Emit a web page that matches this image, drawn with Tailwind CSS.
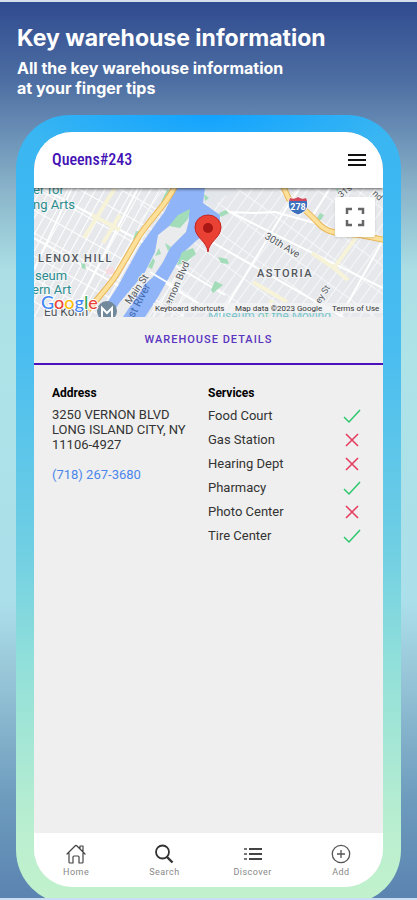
<!DOCTYPE html>
<html lang="en">
<head>
<meta charset="utf-8">
<meta name="viewport" content="width=device-width, initial-scale=1">
<title>Key warehouse information</title>
<script src="https://cdn.jsdelivr.net/npm/@tailwindcss/browser@4"></script>
</head>
<body class="font-[Roboto,sans-serif]">
<div class="flex min-h-screen flex-col overflow-hidden border-t-2 border-b-2 border-t-[#d5dfee] border-b-[#c9def2] bg-[linear-gradient(to_bottom,#304b90_0%,#4e6fa3_9%,#8ab4ca_21%,#abdfe5_30%,#aee3e8_40%,#abdfea_67%,#98c6d8_75%,#6d9bbd_89%,#5b84b1_100%)]">
  <header class="px-[17px] pt-5 font-[Inter,sans-serif] text-white">
    <h1 class="text-[23px] leading-8 font-bold">Key warehouse information</h1>
    <p class="pt-1 text-base leading-5 font-bold">All the key warehouse information<br>at your finger tips</p>
  </header>

  <main class="mx-4 mt-[17px] -mb-[6px] flex flex-1 flex-col rounded-[54px] bg-[radial-gradient(ellipse_190px_50px_at_50%_0,#12a3ff,transparent),linear-gradient(to_bottom,#38b5f2_0%,#4abdf0_30%,#70cfe3_55%,#90dfda_69%,#b9eed0_90%,#c2f2cc_100%)] px-[18px] py-[17px]">
    <div class="flex flex-1 flex-col overflow-hidden rounded-[38px] bg-[#efefef]">
      <div class="relative z-10 flex h-14 items-center justify-between bg-white pr-[17px] pl-[18px] shadow-[0_1px_3px_rgba(0,0,0,0.6)]">
        <h2 class="font-['Roboto_Condensed',Roboto,sans-serif] text-base font-medium text-[#4312b5]">Queens#243</h2>
        <button type="button" aria-label="Menu" class="text-[#111]">
          <svg class="h-4 w-[18px]" viewBox="0 0 18 16" fill="none" stroke="currentColor" stroke-width="2"><path d="M0 3h18M0 8h18M0 13h18"/></svg>
        </button>
      </div>

      <section aria-label="Map" class="relative h-[129px]">
        <svg class="h-full w-full" viewBox="34 188 349 129" preserveAspectRatio="xMidYMid slice" font-family="Roboto, sans-serif">
          <defs>
            <pattern id="west" width="8" height="20" patternUnits="userSpaceOnUse" patternTransform="translate(40 190) rotate(29)"><path d="M0 0H8M0 0V20" stroke="#fff" stroke-width="2" fill="none"/></pattern>
            <pattern id="east" width="9" height="23" patternUnits="userSpaceOnUse" patternTransform="translate(240 190) rotate(36)"><path d="M0 0H9M0 0V23" stroke="#f6f7f9" stroke-width="2" fill="none"/></pattern>
          </defs>
          <rect x="34" y="188" width="349" height="129" fill="#e6e8eb"/>
          <rect x="34" y="188" width="150" height="129" fill="url(#west)"/>
          <rect x="140" y="188" width="243" height="129" fill="url(#east)"/>
          <g stroke="#fff" fill="none" stroke-width="2">
            <path d="M34 270 72 188M72 317 138 188M42 188 150 246M34 238 119 286M205 238 383 340M226 210 383 288M220 317 285 210 300 188M226 212 255 213 275 212 315 223M340 317 383 240M154 276 220 317M176 266 225 295M330 188 312 217"/>
          </g>
          <g stroke="#f7f3d8" fill="none" stroke-width="4">
            <path d="M84 238 115 188M92 215 120 230M103 243 120 215M312 253 334 268 357 236M253 282 287 302M272 300 265 317M334 268 348 280"/>
          </g>
          <path d="M176 188H205L203 203 220 215V224L197 240 184 252 176 265 167 281 158 297 145 317H98L118 286 140 246 165 211Z" fill="#8fb4f8"/>
          <path d="M205 188 205 203 215 207 220 198 236 192V188Z" fill="#e3e6ea"/>
          <path d="M188 210 173 223 158 235 155 252 145 272 137 282 120 302 110 317H123L133 302 143 286 153 277 163 262 170 248 186 232 189 220Z" fill="#e9ebed"/>
          <path d="M150 272 180 290" stroke="#fff" stroke-width="2"/>
          <g fill="#a3dcb8">
            <path d="M190 209 178 215 169 226 180 228 188 219ZM159 248 155 256 161 254ZM165 243 168 251 171 247ZM153 258 148 267 152 269 155 261ZM182 252 193 248 196 254 185 263 177 265ZM167 190 161 202 165 205 174 190ZM136 231 133 239 139 240 141 232ZM81 263 85 264 86 269 82 268ZM204 194 209 198 205 201ZM219 213 226 210 229 213 221 217ZM218 257 227 259 229 264 221 263ZM215 281 223 285 213 293 211 290ZM320 213 324 215 321 220 316 220ZM336 189 341 190 338 194Z"/>
          </g>
          <path d="M105 270 112 266 116 273 107 275Z" fill="#f4dce0"/>
          <path d="M175 186C166 206 147 222 138 238L118 272C110 286 100 295 88 310" fill="none" stroke="#e9b75a" stroke-width="6"/>
          <path d="M175 186C166 206 147 222 138 238L118 272C110 286 100 295 88 310" fill="none" stroke="#fde19a" stroke-width="4"/>
          <path d="M282 184 289 199C303 207 311 215 319 224S337 233 360 235L385 240" fill="none" stroke="#e9b75a" stroke-width="6"/>
          <path d="M282 184 289 199C303 207 311 215 319 224S337 233 360 235L385 240" fill="none" stroke="#fde19a" stroke-width="4"/>

          <path d="M290 198Q294 200 298 197 302 200 306 198C309 204 309 211 298 215 287 211 287 204 290 198Z" fill="#3c70bc" stroke="#fff"/>
          <path d="M290 198Q294 200 298 197 302 200 306 198L307 201H289Z" fill="#d6485a"/>
          <text x="298" y="210" text-anchor="middle" font-size="9" font-weight="700" fill="#fff">278</text>

          <g fill="#2c8c8f" stroke="#f2f5f6" stroke-width="2" paint-order="stroke" font-size="13">
            <text x="33" y="194">er for</text><text x="33" y="209">ng Arts</text>
            <text x="35" y="280">seum</text><text x="32" y="294">ern Art</text>
          </g>
          <g fill="#51565b" stroke="#f3f4f5" stroke-width="2" paint-order="stroke">
            <text x="38" y="262" font-size="11" font-weight="500" letter-spacing="1.5">LENOX HILL</text>
            <text x="257" y="277" font-size="11" font-weight="500" letter-spacing="1.5">ASTORIA</text>
            <text x="44" y="316" font-size="12">Eu Korin</text>
            <text transform="translate(264 238) rotate(31)" font-size="10">30th Ave</text>
            <text transform="translate(130 305) rotate(-56)" font-size="10">Main St</text>
            <text transform="translate(168 312) rotate(-66)" font-size="10">Vernon Blvd</text>
            <text transform="translate(320 304) rotate(-58)" font-size="9">ey St</text>
            <text transform="translate(341 198) rotate(-38)" font-size="9">31st</text>
            <text transform="translate(372 194) rotate(45)" font-size="9">nd</text>
          </g>
          <text transform="translate(128 329) rotate(-62)" font-size="11" fill="#3f69ad">East River</text>

          <circle cx="107" cy="311" r="10" fill="#71899a"/>
          <path d="M102 317V308L107 313 112 308V317" fill="none" stroke="#fff" stroke-width="2"/>
          <text x="208" y="320" font-size="12" fill="#7cc6cb">Museum of the Moving</text>
          <rect x="153" y="303" width="230" height="10" fill="#f2f3f4" fill-opacity="0.8"/>
          <g fill="#333" font-size="8">
            <text x="155" y="311">Keyboard shortcuts</text>
            <text x="235" y="311">Map data ©2023 Google</text>
            <text x="332" y="311">Terms of Use</text>
          </g>
          <text x="41" y="309" font-family="Lato, sans-serif" font-size="18" font-weight="500" stroke="#fff" stroke-width="2" paint-order="stroke"><tspan fill="#4285f4">G</tspan><tspan fill="#ea4335">o</tspan><tspan fill="#fbbc05">o</tspan><tspan fill="#4285f4">g</tspan><tspan fill="#34a853">l</tspan><tspan fill="#ea4335">e</tspan></text>

          <path d="M208 252C207 241 195 238 195 227A13 12 0 0 1 221 227C221 238 209 241 208 252Z" fill="#e94235" stroke="#c5221f"/>
          <circle cx="208" cy="228" r="5" fill="#a81713"/>
        </svg>
        <button type="button" aria-label="Toggle fullscreen view" class="absolute top-[9px] right-2 flex size-10 items-center justify-center rounded-xs bg-white text-[#666] shadow">
          <svg class="size-5" viewBox="0 0 20 20" fill="none" stroke="currentColor" stroke-width="2.500"><path d="M2 7V2H7M13 2H18V7M18 13V18H13M7 18H2V13"/></svg>
        </button>
      </section>

      <button type="button" class="h-12 border-b-2 border-[#4a12b8] text-[11px] font-medium tracking-[1px] text-[#5a35c0]">WAREHOUSE DETAILS</button>

      <div class="grid flex-1 grid-cols-[156px_1fr] content-start pt-5 pr-[21px] pl-[18px] text-[13px] text-[#333]">
        <section>
          <h3 class="text-xs leading-4 font-bold text-black">Address</h3>
          <address class="pt-[6px] leading-[15px] not-italic">3250 VERNON BLVD<br>LONG ISLAND CITY, NY<br>11106-4927</address>
          <a href="tel:7182673680" class="mt-[15px] block leading-[15px] text-[#4a86ea]">(718) 267-3680</a>
        </section>
        <section>
          <h3 class="text-xs leading-4 font-bold text-black">Services</h3>
          <ul class="pt-[3px]">
            <li class="flex h-6 items-center justify-between">Food Court<svg role="img" aria-label="Available" class="h-4 w-5" viewBox="0 0 20 16" fill="none" stroke="#2dc76d" stroke-width="1.500"><path d="M2 9 7 14 18 2"/></svg></li>
            <li class="flex h-6 items-center justify-between">Gas Station<svg role="img" aria-label="Not available" class="h-4 w-5" viewBox="0 0 20 16" fill="none" stroke="#e5395f" stroke-width="1.500"><path d="M4 2 16 14M16 2 4 14"/></svg></li>
            <li class="flex h-6 items-center justify-between">Hearing Dept<svg role="img" aria-label="Not available" class="h-4 w-5" viewBox="0 0 20 16" fill="none" stroke="#e5395f" stroke-width="1.500"><path d="M4 2 16 14M16 2 4 14"/></svg></li>
            <li class="flex h-6 items-center justify-between">Pharmacy<svg role="img" aria-label="Available" class="h-4 w-5" viewBox="0 0 20 16" fill="none" stroke="#2dc76d" stroke-width="1.500"><path d="M2 9 7 14 18 2"/></svg></li>
            <li class="flex h-6 items-center justify-between">Photo Center<svg role="img" aria-label="Not available" class="h-4 w-5" viewBox="0 0 20 16" fill="none" stroke="#e5395f" stroke-width="1.500"><path d="M4 2 16 14M16 2 4 14"/></svg></li>
            <li class="flex h-6 items-center justify-between">Tire Center<svg role="img" aria-label="Available" class="h-4 w-5" viewBox="0 0 20 16" fill="none" stroke="#2dc76d" stroke-width="1.500"><path d="M2 9 7 14 18 2"/></svg></li>
          </ul>
        </section>
      </div>

      <nav class="-mx-[2px] grid h-[54px] grid-cols-4 bg-white text-[9px] leading-3 tracking-wider text-[#888]">
        <a href="#home" class="flex flex-col items-center pt-[11px]">
          <svg class="size-5" viewBox="0 0 20 20" fill="none" stroke="#444" stroke-width="1.200" stroke-linejoin="round" stroke-linecap="round"><path d="M1 10 9 2Q10 1 11 2L19 10M14 4.500V2H17V8M3 9V18Q3 19 4 19H7V13Q7 12 8 12H12Q13 12 13 13V19H16Q17 19 17 18V9"/></svg>
          <span class="pt-[2px]">Home</span>
        </a>
        <a href="#search" class="flex flex-col items-center pt-[11px]">
          <svg class="size-5" viewBox="0 0 20 20" fill="none" stroke="#333"><circle cx="8.500" cy="8" r="6.500" stroke-width="1.800"/><path d="M13 13 18.500 18.500" stroke-width="2.400"/></svg>
          <span class="pt-[2px]">Search</span>
        </a>
        <a href="#discover" class="flex flex-col items-center pt-[11px]">
          <svg class="size-5" viewBox="0 0 20 20" fill="none" stroke="#444" stroke-width="2"><path d="M1 5H4M1 10H4M1 15H4" stroke="#777"/><path d="M6 5H19M6 10H19M6 15H19"/></svg>
          <span class="pt-[2px]">Discover</span>
        </a>
        <a href="#add" class="flex flex-col items-center pt-[11px]">
          <svg class="size-5" viewBox="0 0 20 20" fill="none" stroke="#555" stroke-width="1.300"><circle cx="10" cy="10" r="8.700"/><path d="M10 6V14M6 10H14"/></svg>
          <span class="pt-[2px]">Add</span>
        </a>
      </nav>
    </div>
  </main>
</div>
</body>
</html>
